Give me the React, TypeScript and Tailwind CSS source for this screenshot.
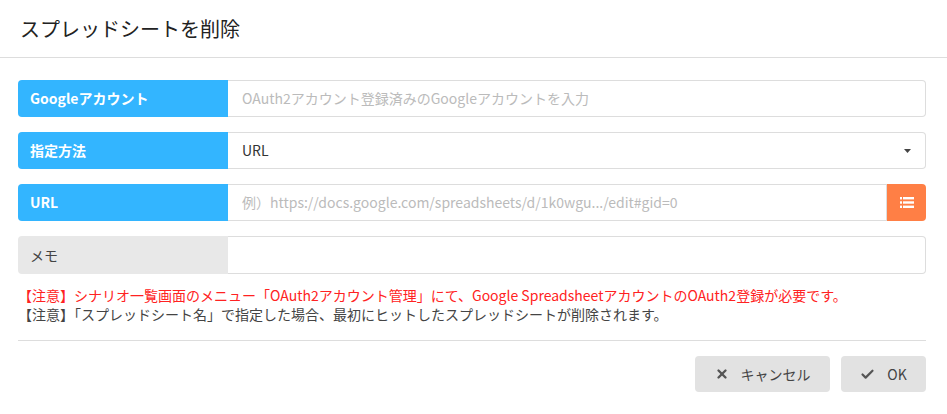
import { Check, X } from 'lucide-react';

const font = { fontFamily: '"Noto Sans CJK JP", "Noto Sans", sans-serif' };

function Label({ text, muted }: { text: string; muted?: boolean }) {
  return (
    <div
      className={
        muted
          ? 'w-[210px] shrink-0 flex items-center px-[12px] text-[14px] text-[#444] bg-[#e8e8e8] rounded-l-[4px]'
          : 'w-[210px] shrink-0 flex items-center px-[12px] text-[14px] font-bold text-white bg-[#33b5ff] rounded-l-[4px]'
      }
    >
      {text}
    </div>
  );
}

export default function App() {
  return (
    <div className="w-[947px] h-[414px] bg-white text-[#333]" style={font}>
      <div className="h-[58px] flex items-center px-[20px] border-b border-[#ddd]">
        <h1 className="text-[20px] text-[#222]">スプレッドシートを削除</h1>
      </div>

      <div className="pl-[18px] pr-[21px] pt-[22px]">
        <div className="flex flex-col gap-[15px]">
          <div className="flex h-[37px]">
            <Label text="Googleアカウント" />
            <div className="flex-1 flex items-center px-[14px] border border-l-0 border-[#ddd] rounded-r-[4px] text-[14px] text-[#bbb]">
              OAuth2アカウント登録済みのGoogleアカウントを入力
            </div>
          </div>

          <div className="flex h-[37px]">
            <Label text="指定方法" />
            <div className="flex-1 flex items-center justify-between px-[14px] pr-[14px] border border-l-0 border-[#ddd] rounded-r-[4px] text-[14px] text-[#333]">
              <span>URL</span>
              <svg width="7" height="4" viewBox="0 0 7 4">
                <path d="M0 0h7L3.5 4z" fill="#444" />
              </svg>
            </div>
          </div>

          <div className="flex h-[37px]">
            <Label text="URL" />
            <div className="flex-1 flex items-center px-[14px] border border-l-0 border-[#ddd] text-[14px] text-[#bbb]">
              例）https://docs.google.com/spreadsheets/d/1k0wgu.../edit#gid=0
            </div>
            <div className="w-[39px] flex items-center justify-center bg-[#ff7f45] rounded-r-[4px]">
              <svg width="14" height="11" viewBox="0 0 14 11">
                <rect x="0" y="0" width="2" height="2.4" fill="white" />
                <rect x="3" y="0" width="11" height="2.4" fill="white" />
                <rect x="0" y="4.3" width="2" height="2.4" fill="white" />
                <rect x="3" y="4.3" width="11" height="2.4" fill="white" />
                <rect x="0" y="8.6" width="2" height="2.4" fill="white" />
                <rect x="3" y="8.6" width="11" height="2.4" fill="white" />
              </svg>
            </div>
          </div>

          <div className="flex h-[38px]">
            <Label text="メモ" muted />
            <div className="flex-1 border border-l-0 border-[#ddd] rounded-r-[4px]" />
          </div>
        </div>

        <div className="mt-[12px] text-[14px] leading-[19px]">
          <p className="text-[#f22]">
            【注意】シナリオ一覧画面のメニュー「OAuth2アカウント管理」にて、Google SpreadsheetアカウントのOAuth2登録が必要です。
          </p>
          <p className="text-[#444]">
            【注意】「スプレッドシート名」で指定した場合、最初にヒットしたスプレッドシートが削除されます。
          </p>
        </div>

        <div className="mt-[16px] border-t border-[#ddd]" />

        <div className="flex justify-end gap-[11px] mt-[15px]">
          <button className="w-[135px] h-[36px] flex items-center justify-center gap-[12px] bg-[#e2e2e2] rounded-[4px] text-[14px] text-[#444]">
            <X size={14} strokeWidth={4} color="#555" />
            キャンセル
          </button>
          <button className="w-[85px] h-[36px] flex items-center justify-center gap-[12px] bg-[#e2e2e2] rounded-[4px] text-[14px] text-[#444]">
            <Check size={15} strokeWidth={3.5} color="#555" />
            OK
          </button>
        </div>
      </div>
    </div>
  );
}
